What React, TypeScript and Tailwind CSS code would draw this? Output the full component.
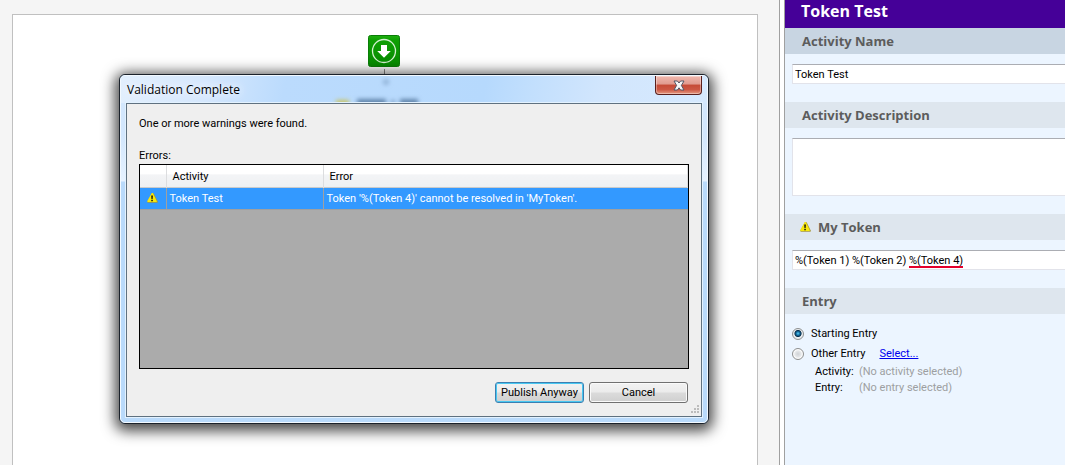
import { useId, useState, type ReactNode } from "react";

function WarningIcon() {
  return (
    <svg width="11" height="10" viewBox="0 0 11 10" className="shrink-0" aria-label="Warning">
      <path d="M5 0 L0.3 8.4 Q0 9.6 1.2 9.8 H10 Q11.2 9.5 10.8 8.4 L6.6 0.2 Z" fill="#a8983a" />
      <path d="M4.8 0 L0.2 8.3 Q0 9 1 9.1 H9.3 Q10 8.9 9.8 8.3 L5.8 0.1 Z" fill="#f8e80c" />
      <path d="M4.1 2.4 H6 L5.7 6 H4.4 Z M4.2 6.8 H5.9 V8.3 H4.2 Z" fill="#2c2a10" />
    </svg>
  );
}

function StartNode() {
  return (
    <svg width="34" height="49" viewBox="0 0 34 49" aria-label="Start">
      <defs>
        <linearGradient id="startFill" x1="0" y1="0" x2="0" y2="1">
          <stop offset="0" stopColor="#1fb00f" />
          <stop offset="0.15" stopColor="#0f9f04" />
          <stop offset="1" stopColor="#068a02" />
        </linearGradient>
      </defs>
      <rect x="0.5" y="0.5" width="31" height="31" rx="2" fill="url(#startFill)" stroke="#0b7d08" />
      <circle cx="16" cy="16" r="11.5" fill="none" stroke="#d5f0d2" strokeWidth="1.3" />
      <path d="M13 10 H19 V16 H22.8 L16 22.8 L9.2 16 H13 Z" fill="#fff" />
      <path d="M16.5 34 V49" stroke="#8a8a8a" />
    </svg>
  );
}

function GlassGhost() {
  return (
    <svg width="100" height="27" viewBox="0 0 100 27" className="absolute left-[211px] top-0" aria-hidden="true">
      <defs>
        <filter id="soft" x="-20%" y="-80%" width="140%" height="260%">
          <feGaussianBlur stdDeviation="2" />
        </filter>
      </defs>
      <g filter="url(#soft)">
        <circle cx="54" cy="6" r="3" fill="#8fb1d6" />
        <rect x="4" y="24" width="13" height="6" fill="#c9c463" />
        <rect x="25" y="23" width="29" height="7" fill="#6285ab" />
        <rect x="59" y="24" width="4" height="6" fill="#7f9fc4" />
        <rect x="68" y="23" width="18" height="7" fill="#6285ab" />
      </g>
    </svg>
  );
}

function Band({ children, strong = false }: { children: ReactNode; strong?: boolean }) {
  return (
    <h2
      className={`flex h-[26px] items-center pl-[17px] font-['Open_Sans','Noto_Sans',sans-serif] text-[13px] font-bold leading-[18px] text-[#5c5c5c] ${
        strong ? "bg-[#c8d5e2]" : "bg-[#dee6ee]"
      }`}
    >
      {children}
    </h2>
  );
}

const field =
  "block w-full resize-none rounded-none border border-r-0 border-[#e2e3ea] border-t-[#abadb3] bg-white px-0.5 outline-none";

const radio =
  "size-3 appearance-none rounded-full border border-[#8e8f8f] bg-[radial-gradient(circle,#d0d3d6_0%,#e6e8ea_45%,#fbfbfb_60%)] checked:bg-[radial-gradient(circle_at_50%_45%,#5fd0f5_0%,#1677ac_22%,#0a2f4c_42%,#e9edf0_54%)]";

function PropertiesPanel() {
  const id = useId();
  const [name, setName] = useState("Token Test");
  const [description, setDescription] = useState("");
  const [token, setToken] = useState("%(Token 1) %(Token 2) %(Token 4)");
  const [entry, setEntry] = useState("start");
  return (
    <aside className="w-[280px] shrink-0 overflow-hidden bg-[#ecf5ff]">
      <h1 className="h-7 bg-[#450098] pl-4 font-['Open_Sans','Noto_Sans',sans-serif] text-base font-bold leading-[22px] text-white">
        {name}
      </h1>
      <Band strong>
        <label htmlFor={`${id}n`}>Activity Name</label>
      </Band>
      <div className="mb-[18px] mt-2.5 pl-[7px]">
        <input id={`${id}n`} className={`${field} h-5`} value={name} onChange={(e) => setName(e.target.value)} />
      </div>
      <Band>
        <label htmlFor={`${id}d`}>Activity Description</label>
      </Band>
      <div className="mb-[18px] mt-2.5 pl-[7px]">
        <textarea
          id={`${id}d`}
          className={`${field} h-[58px]`}
          value={description}
          onChange={(e) => setDescription(e.target.value)}
        />
      </div>
      <Band>
        <span className="-ml-0.5 mr-[7px]">
          <WarningIcon />
        </span>
        <label htmlFor={`${id}t`}>My Token</label>
      </Band>
      <div className="relative mb-[18px] mt-2.5 pl-[7px]">
        <input id={`${id}t`} className={`${field} h-5`} value={token} onChange={(e) => setToken(e.target.value)} />
        <span className="absolute left-[124px] top-4 h-0.5 w-[54px] bg-[#e4002b]" />
      </div>
      <Band>Entry</Band>
      <div className="pl-[7px] pt-2.5">
        <label className="flex h-5 items-center gap-[7px]">
          <input type="radio" name="entry" className={radio} checked={entry === "start"} onChange={() => setEntry("start")} />
          Starting Entry
        </label>
        <div className="flex h-5 items-center gap-3.5">
          <label className="flex items-center gap-[7px]">
            <input type="radio" name="entry" className={radio} checked={entry === "other"} onChange={() => setEntry("other")} />
            Other Entry
          </label>
          <a href="#select" className="text-[#0000ee] underline">
            Select...
          </a>
        </div>
        <dl className="grid grid-cols-[44px_1fr] pl-[23px] leading-4">
          <dt>Activity:</dt>
          <dd className="text-[#9d9fa1]">(No activity selected)</dd>
          <dt>Entry:</dt>
          <dd className="text-[#9d9fa1]">(No entry selected)</dd>
        </dl>
      </div>
    </aside>
  );
}

const headCell =
  "border-r border-[#dcdddf] bg-[linear-gradient(#fff_40%,#f3f4f6_45%,#eef0f2)] px-1.5 pt-0.5 text-left font-normal";

function ValidationDialog() {
  return (
    <div
      role="dialog"
      aria-labelledby="dialog-title"
      className="absolute left-[119px] top-[74px] w-[590px] rounded-[6px] border border-[#1b222b] bg-[#b9dafb] shadow-[0_3px_14px_4px_rgba(0,0,0,0.72)]"
    >
      <div className="relative rounded-[5px] border border-[#f2f9ff] bg-[linear-gradient(#d3e7fd_0px,#d3e7fd_60px,#e6f2ff_105px,#b9dafb_106px)] px-[5px] pb-[5px]">
        <div className="absolute inset-x-0 top-0 h-[27px] rounded-t-[4px] bg-[linear-gradient(100deg,#e2effd_0%,#d6e8fd_14%,#bbdbfd_28%,#b6d9fd_62%,#c2dffd_70%,#d2e6fd_82%,#d6e9fe_100%)]" />
        <GlassGhost />
        <header className="relative flex h-[27px] justify-between">
          <h2
            id="dialog-title"
            className="h-[27px] pl-px font-['Open_Sans','Noto_Sans',sans-serif] text-xs leading-[27px] text-black [text-shadow:0_0_8px_#fff,0_0_12px_#fff]"
          >
            Validation Complete
          </h2>
          <button
            aria-label="Close"
            className="flex h-[19px] w-[47px] items-center justify-center rounded-b-[4px] border border-t-0 border-[#5a1f1c] bg-[linear-gradient(#f0b8ae_0%,#e09a8e_45%,#c54a36_50%,#cc5642_75%,#e69a82_100%)] shadow-[inset_0_0_0_1px_rgba(255,255,255,0.35)]"
          >
            <svg width="12" height="11" viewBox="0 0 12 11">
              <path
                d="M1 1 H4.4 L6 3 L7.6 1 H11 L8.4 5.4 L11 10 H7.6 L6 7.8 L4.4 10 H1 L3.6 5.4 Z"
                fill="#f6f6f6"
                stroke="#535666"
                strokeWidth="1"
                strokeLinejoin="round"
              />
            </svg>
          </button>
        </header>
        <section className="relative border border-[#5f7180] bg-[#efefef] px-3 pb-[13px] pt-[13px] shadow-[0_0_0_1px_#e3f2ff]">
          <p>One or more warnings were found.</p>
          <p className="mt-[18px]" id="errors-label">
            Errors:
          </p>
          <div className="mt-px h-[205px] border border-black bg-[#ababab]">
            <table aria-labelledby="errors-label" className="w-full table-fixed border-collapse">
              <colgroup>
                <col className="w-[26px]" />
                <col className="w-[157px]" />
                <col />
              </colgroup>
              <thead>
                <tr className="h-[22px] border-b border-[#c9cacb]">
                  <th className={headCell} />
                  <th className={headCell}>Activity</th>
                  <th className={headCell}>Error</th>
                </tr>
              </thead>
              <tbody>
                <tr className="h-[22px] border-b border-[#a0a0a0] bg-[#3399ff] text-white">
                  <td className="border-r border-[#a0a0a0] pl-[7px]">
                    <WarningIcon />
                  </td>
                  <td className="border-r border-[#a0a0a0] px-[3px] pt-0.5">Token Test</td>
                  <td className="px-[3px] pt-0.5">Token '%(Token 4)' cannot be resolved in 'MyToken'.</td>
                </tr>
              </tbody>
            </table>
          </div>
          <div className="mr-px mt-[13px] flex justify-end gap-[5px]">
            <button className="h-[21px] w-[89px] rounded-[3px] border border-[#3c7fb1] bg-[linear-gradient(#f2f2f2_0%,#ebebeb_48%,#dbdbdb_52%,#cfcfcf_100%)] shadow-[inset_0_0_0_1px_#48c8f2]">
              Publish Anyway
            </button>
            <button className="h-[21px] w-[99px] rounded-[3px] border border-[#707070] bg-[linear-gradient(#f2f2f2_0%,#ebebeb_48%,#dbdbdb_52%,#cfcfcf_100%)] shadow-[inset_0_0_0_1px_#fafafa]">
              Cancel
            </button>
          </div>
          <svg width="9" height="9" viewBox="0 0 9 9" className="absolute bottom-0.5 right-0.5" aria-hidden="true">
            <path d="M7 0h2v2h-2z M7 3h2v2h-2z M4 3h2v2h-2z M7 6h2v2h-2z M4 6h2v2h-2z M1 6h2v2h-2z" fill="#bcbcbc" />
          </svg>
        </section>
      </div>
    </div>
  );
}

export default function App() {
  return (
    <div className="relative flex h-screen overflow-hidden bg-[#f5f5f5] font-[Roboto,'Liberation_Sans',sans-serif] text-[11px] leading-[14px] text-black">
      <main className="min-w-0 flex-1 pl-3 pr-[21px] pt-3.5">
        <div className="flex h-full justify-center border border-b-0 border-[#c0c0c0] bg-white pt-5">
          <StartNode />
        </div>
      </main>
      <div className="w-1.5 shrink-0 border-x border-[#a0a0a0] bg-white" />
      <PropertiesPanel />
      <ValidationDialog />
    </div>
  );
}
